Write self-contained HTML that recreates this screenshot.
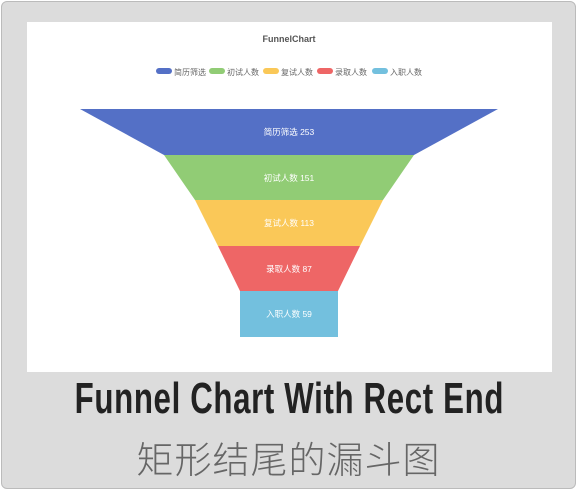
<!DOCTYPE html>
<html><head><meta charset="utf-8"><style>
body{margin:0;width:577px;height:490px;background:#fff;overflow:hidden;font-family:"Liberation Sans","Noto Sans CJK SC",sans-serif}
.outer{position:absolute;left:1px;top:1px;width:573px;height:486px;background:#dcdcdc;border:1px solid #bbb;border-radius:6px}
.panel{position:absolute;left:27px;top:22px;width:525px;height:350px;background:#fff}
.t1{position:absolute;left:-9px;width:577px;top:374px;text-align:center;font-size:44px;font-weight:bold;color:#222;transform:scaleX(0.71);transform-origin:center;white-space:nowrap;letter-spacing:0.9px}
.t2{position:absolute;left:0;width:577px;top:430px;text-align:center;font-size:37px;color:#666;font-family:"Noto Sans CJK SC",sans-serif;font-weight:300;letter-spacing:1px}
</style></head><body>
<div class="outer"></div>
<div class="panel"></div>
<svg width="577" height="490" style="position:absolute;left:0;top:0" font-family="Liberation Sans, Noto Sans CJK SC, sans-serif">
<text x="289" y="42" text-anchor="middle" font-size="9" font-weight="bold" fill="#555">FunnelChart</text>
<g font-size="8" fill="#666">
<rect x="156" y="68" width="16" height="6" rx="3" fill="#5470c6"/><text x="174" y="75">简历筛选</text>
<rect x="209" y="68" width="16" height="6" rx="3" fill="#91cc75"/><text x="227" y="75">初试人数</text>
<rect x="263" y="68" width="16" height="6" rx="3" fill="#fac858"/><text x="281" y="75">复试人数</text>
<rect x="317" y="68" width="16" height="6" rx="3" fill="#ee6666"/><text x="335" y="75">录取人数</text>
<rect x="372" y="68" width="16" height="6" rx="3" fill="#73c0de"/><text x="390" y="75">入职人数</text>
</g>
<polygon points="80,109 498,109 414,155 164,155" fill="#5470c6"/>
<polygon points="164,155 414,155 383,200 195,200" fill="#91cc75"/>
<polygon points="195,200 383,200 360,246 218,246" fill="#fac858"/>
<polygon points="218,246 360,246 338,291 240,291" fill="#ee6666"/>
<rect x="240" y="291" width="98" height="46" fill="#73c0de"/>
<g font-size="8.5" fill="#fff" text-anchor="middle">
<text x="289" y="135">简历筛选 253</text>
<text x="289" y="181">初试人数 151</text>
<text x="289" y="226">复试人数 113</text>
<text x="289" y="272">录取人数 87</text>
<text x="289" y="317">入职人数 59</text>
</g>
</svg>
<div class="t1">Funnel Chart With Rect End</div>
<div class="t2">矩形结尾的漏斗图</div>
</body></html>
